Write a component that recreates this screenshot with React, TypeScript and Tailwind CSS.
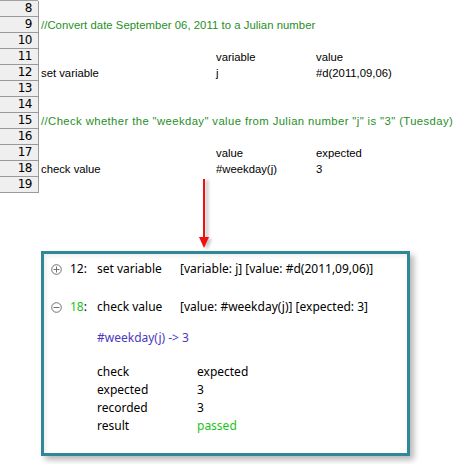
import React from "react";

type Row = { n: number; a?: string; b?: string; c?: string; comment?: boolean };

const rows: Row[] = [
  { n: 8 },
  { n: 9, a: "//Convert date September 06, 2011 to a Julian number", comment: true },
  { n: 10 },
  { n: 11, b: "variable", c: "value" },
  { n: 12, a: "set variable", b: "j", c: "#d(2011,09,06)" },
  { n: 13 },
  { n: 14 },
  { n: 15, a: "//Check whether the \"weekday\" value from Julian number \"j\" is \"3\" (Tuesday)", comment: true },
  { n: 16 },
  { n: 17, b: "value", c: "expected" },
  { n: 18, a: "check value", b: "#weekday(j)", c: "3" },
  { n: 19 },
];

const sheetFont = "font-['Liberation_Sans',Arial,sans-serif]";
const panelFont = "font-['Noto_Sans','DejaVu_Sans',sans-serif]";

function Sheet() {
  return (
    <div className={`border-t border-[#a0a0a0] w-[38px] ${sheetFont}`}>
      {rows.map((r) => (
        <div key={r.n} className="flex h-[16px] w-[460px]">
          <div className="w-[39px] shrink-0 bg-[#efefef] border-b border-r border-[#9a9a9a] text-right pr-[6px] text-[12px] leading-[15px] text-black font-['DejaVu_Sans',sans-serif] tracking-[-0.5px]">
            {r.n}
          </div>
          {r.comment ? (
            <div
              className={`pl-[2px] text-[11.3px] leading-[16px] text-[#1f8f1f] whitespace-nowrap ${
                r.n === 15 ? "tracking-[0.4px]" : "tracking-[0.05px]"
              }`}
            >
              {r.a}
            </div>
          ) : (
            <div className="flex text-[11.3px] leading-[16px] text-black whitespace-nowrap">
              <div className="w-[177px] pl-[2px]">{r.a}</div>
              <div className="w-[100px]">{r.b}</div>
              <div>{r.c}</div>
            </div>
          )}
        </div>
      ))}
    </div>
  );
}

function Plus({ minus }: { minus?: boolean }) {
  return (
    <svg width="11" height="11" viewBox="0 0 11 11" className="shrink-0">
      <circle cx="5.5" cy="5.5" r="4.8" fill="none" stroke="#707070" strokeWidth="1" />
      <line x1="2.5" y1="5.5" x2="8.5" y2="5.5" stroke="#707070" strokeWidth="1" />
      {!minus && <line x1="5.5" y1="2.5" x2="5.5" y2="8.5" stroke="#707070" strokeWidth="1" />}
    </svg>
  );
}

function Arrow() {
  return (
    <svg width="20" height="74" viewBox="0 0 20 74" className="absolute left-[196px] top-[177px]">
      <defs>
        <filter id="sh" x="-50%" y="-10%" width="200%" height="130%">
          <feGaussianBlur stdDeviation="1.5" />
        </filter>
      </defs>
      <g filter="url(#sh)" opacity="0.35">
        <line x1="11" y1="3" x2="11" y2="66" stroke="#666" strokeWidth="3" />
        <polygon points="6,62 16,62 11,73" fill="#666" />
      </g>
      <line x1="8" y1="2" x2="8" y2="62" stroke="#f01010" strokeWidth="2" />
      <polygon points="3,60 13,60 8,71" fill="#f01010" />
    </svg>
  );
}

function Panel() {
  return (
    <div className={`ml-[41px] mt-[58px] w-[369px] h-[205px] border-[3px] border-[#2f8798] bg-white shadow-[4px_4px_6px_rgba(0,0,0,0.28),inset_2px_2px_4px_rgba(0,0,0,0.08)] ${panelFont} text-[12px] text-black`}>
      <div className="pl-[7px] pt-[7px] flex flex-col">
        <div className="flex items-center h-[16px] whitespace-nowrap">
          <Plus />
          <span className="ml-[8px] w-[27px]">12:</span>
          <span className="w-[83px]">set variable</span>
          <span>[variable: j] [value: #d(2011,09,06)]</span>
        </div>
        <div className="flex items-center h-[16px] mt-[22px] whitespace-nowrap">
          <Plus minus />
          <span className="ml-[8px] w-[27px]">
            <span className="text-[#19c419]">18</span>:
          </span>
          <span className="w-[83px]">check value</span>
          <span>[value: #weekday(j)] [expected: 3]</span>
        </div>
        <div className="ml-[46px] mt-[15px] h-[16px] leading-[16px] text-[#4b39c0] whitespace-nowrap">#weekday(j) -&gt; 3</div>
        <div className="ml-[46px] mt-[17px] grid grid-cols-[100px_auto] leading-[18px]">
          <span>check</span>
          <span>expected</span>
          <span>expected</span>
          <span>3</span>
          <span>recorded</span>
          <span>3</span>
          <span>result</span>
          <span className="text-[#19c419]">passed</span>
        </div>
      </div>
    </div>
  );
}

export default function App() {
  return (
    <div className="relative w-[460px] h-[464px] bg-white overflow-hidden">
      <Sheet />
      <Panel />
      <Arrow />
    </div>
  );
}
